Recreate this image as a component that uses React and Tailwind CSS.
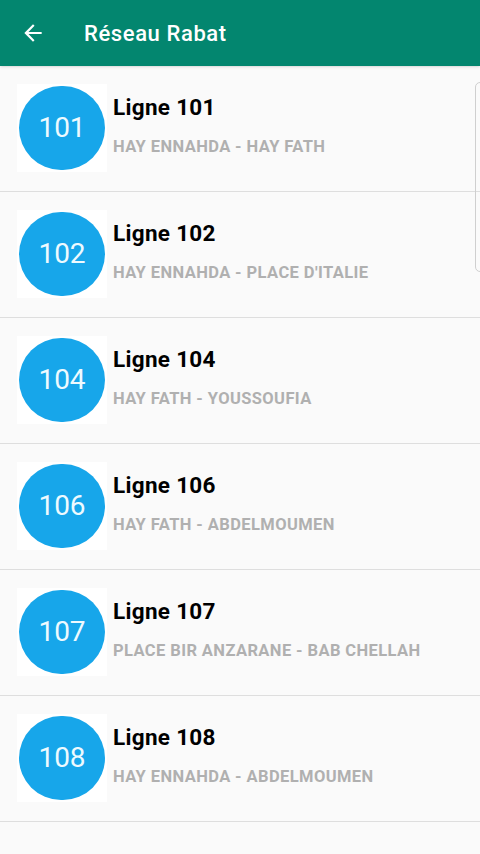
// App.jsx

const lignes = [
  { num: '101', route: 'HAY ENNAHDA - HAY FATH' },
  { num: '102', route: "HAY ENNAHDA - PLACE D'ITALIE" },
  { num: '104', route: 'HAY FATH - YOUSSOUFIA' },
  { num: '106', route: 'HAY FATH - ABDELMOUMEN' },
  { num: '107', route: 'PLACE BIR ANZARANE - BAB CHELLAH' },
  { num: '108', route: 'HAY ENNAHDA - ABDELMOUMEN' },
];

function BackArrow() {
  return (
    <svg width="26" height="26" viewBox="0 0 24 24" fill="currentColor">
      <path d="M20 11H7.83l5.59-5.59L12 4l-8 8 8 8 1.41-1.41L7.83 13H20v-2z" />
    </svg>
  );
}

export default function App() {
  return (
    <div className="relative w-[480px] h-[854px] overflow-hidden bg-[#fafafa] font-['Roboto',sans-serif]">
      {/* Toolbar */}
      <header className="h-[66px] bg-[#03866f] flex items-center text-white shadow-sm">
        <div className="w-[84px] pl-[20px] flex items-center">
          <BackArrow />
        </div>
        <h1 className="text-[22px] font-medium tracking-[0.6px]">Réseau Rabat</h1>
      </header>

      {/* List of lines */}
      <ul>
        {lignes.map((l) => (
          <li key={l.num} className="h-[126px] border-b border-[#dedede] flex">
            <div className="ml-[17px] mt-[18px] w-[90px] h-[88px] bg-white flex items-center justify-center">
              <div className="w-[86px] h-[84px] rounded-full bg-[#17a6ea] flex items-center justify-center">
                <span className="text-[28px] text-[#eefaff] leading-none">{l.num}</span>
              </div>
            </div>
            <div className="ml-[6px] pt-[27px]">
              <div className="text-[22.5px] leading-[28px] font-bold tracking-[0.3px] text-black">Ligne {l.num}</div>
              <div className="mt-[16px] text-[16.5px] leading-[20px] font-bold tracking-[0.4px] text-[#b0b0b0]">{l.route}</div>
            </div>
          </li>
        ))}
      </ul>

      {/* scroll edge indicator */}
      <div className="absolute left-[475px] top-[82px] w-[10px] h-[190px] rounded-l-[5px] border border-[#cfcfcf]" />
    </div>
  );
}
